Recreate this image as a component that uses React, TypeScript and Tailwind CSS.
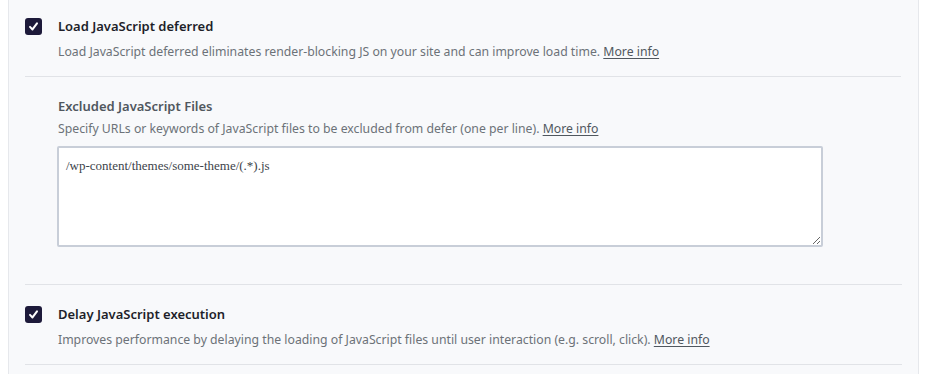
import React from 'react';

function CheckBox() {
  return (
    <span className="flex h-[17px] w-[17px] shrink-0 items-center justify-center rounded-[3px] bg-[#1d1a3a]">
      <svg width="11" height="11" viewBox="0 0 12 12" fill="none">
        <path d="M2.2 6.4 L4.9 9.2 L9.8 2.6" stroke="#fff" strokeWidth="2.2" strokeLinecap="round" strokeLinejoin="round" />
      </svg>
    </span>
  );
}

function MoreInfo() {
  return <a className="text-[#50575e] underline underline-offset-2 cursor-pointer">More info</a>;
}

export default function App() {
  return (
    <div className="min-h-screen bg-white" style={{ fontFamily: '"Noto Sans", "Open Sans", sans-serif' }}>
      <div className="ml-2 mr-2 h-[374px] overflow-hidden border-x border-[#e6e8ec] bg-[#f8f9fb] pl-4 pr-4">
        <div className="flex flex-col">
          {/* defer */}
          <div className="flex flex-col pt-[17px] pb-[15px] border-b border-[#e1e3e7] mr-[1px]">
            <div className="flex items-center gap-4">
              <CheckBox />
              <span className="text-[13px] font-semibold text-[#1e1f2a]">Load JavaScript deferred</span>
            </div>
            <p className="mt-[6px] pl-[33px] text-[12.25px] text-[#6c7278]">
              Load JavaScript deferred eliminates render-blocking JS on your site and can improve load time. <MoreInfo />
            </p>
          </div>

          {/* excluded */}
          <div className="flex flex-col pl-[32px] pt-[20px] pb-[37px] border-b border-[#e1e3e7]">
            <span className="pl-[1px] text-[13px] font-semibold text-[#50575e]">Excluded JavaScript Files</span>
            <p className="mt-[4px] pl-[1px] text-[12.25px] text-[#6c7278]">
              Specify URLs or keywords of JavaScript files to be excluded from defer (one per line). <MoreInfo />
            </p>
            <textarea
              readOnly
              defaultValue="/wp-content/themes/some-theme/(.*).js"
              className="mt-[7px] h-[101px] w-[766px] resize rounded-[2px] border-2 border-[#c8ced8] bg-white px-[7px] pt-[8px] pb-[5px] text-[13px] text-[#3c434a] outline-none"
              style={{ fontFamily: '"Liberation Serif", serif' }}
            />
          </div>

          {/* delay */}
          <div className="flex flex-col pt-[20px] pb-[14px] border-b border-[#e1e3e7]">
            <div className="flex items-center gap-4">
              <CheckBox />
              <span className="text-[13px] font-semibold text-[#1e1f2a]">Delay JavaScript execution</span>
            </div>
            <p className="mt-[7px] pl-[33px] text-[12.25px] text-[#6c7278]">
              Improves performance by delaying the loading of JavaScript files until user interaction (e.g. scroll, click). <MoreInfo />
            </p>
          </div>
        </div>
      </div>
    </div>
  );
}
